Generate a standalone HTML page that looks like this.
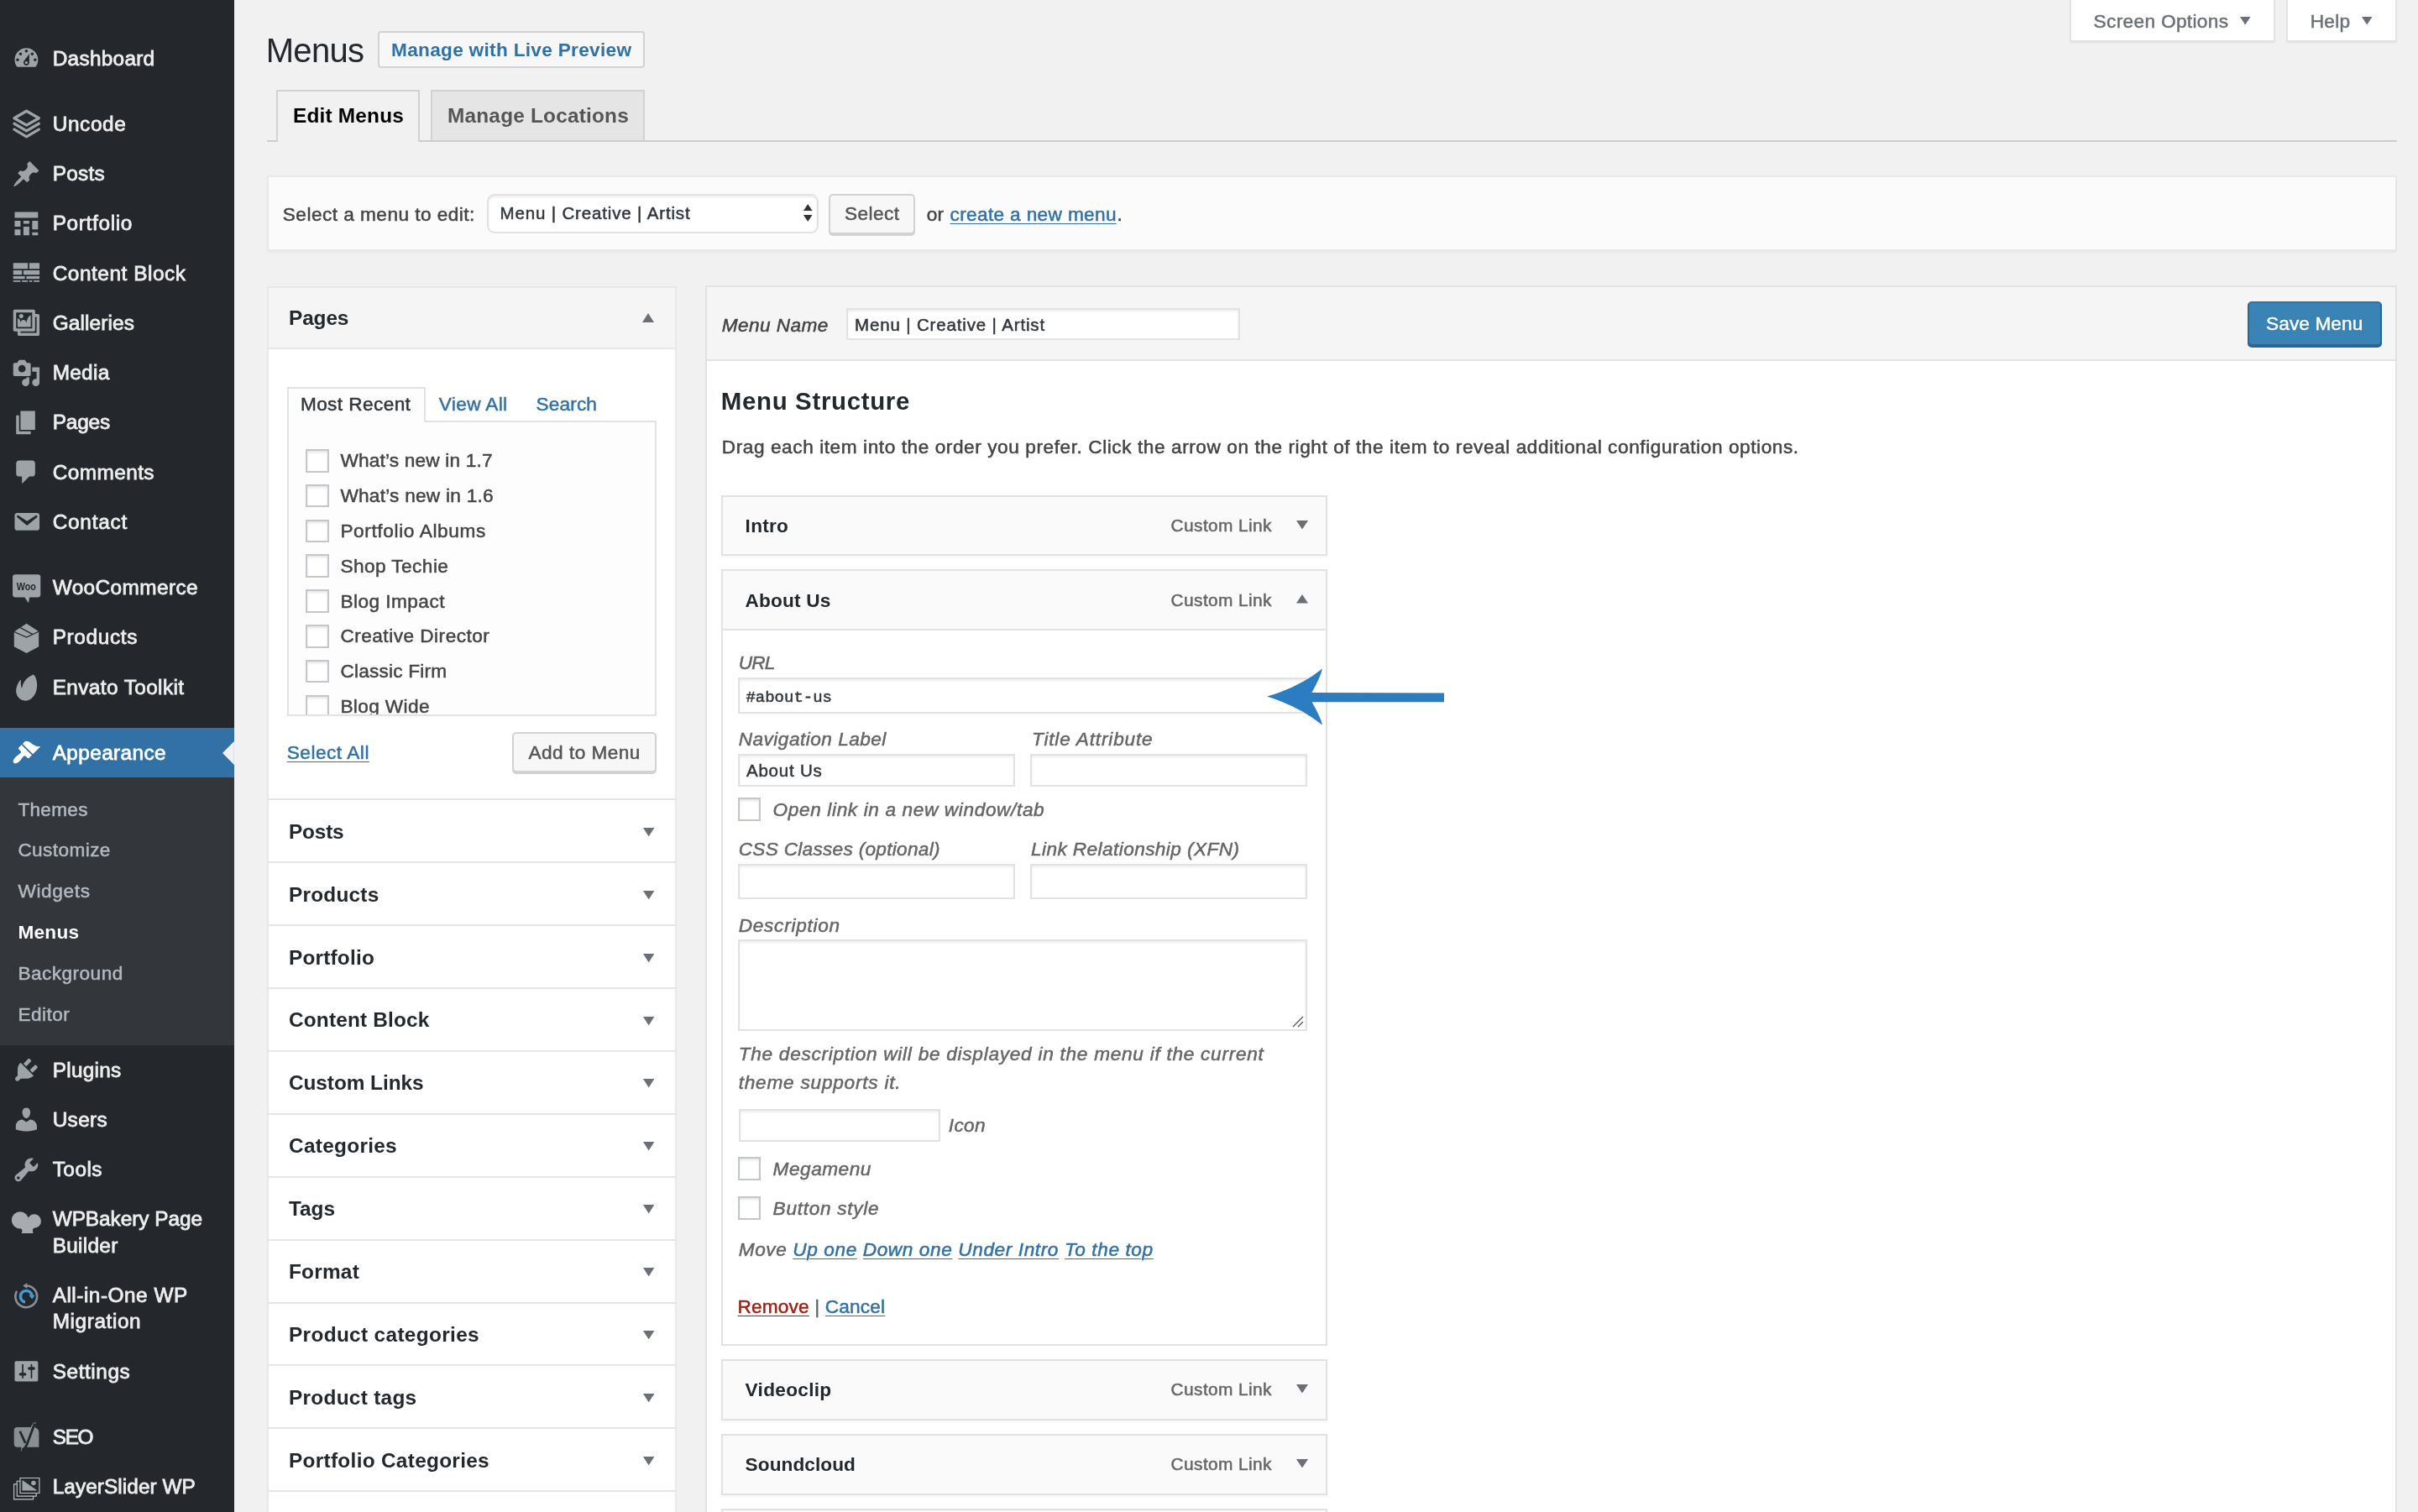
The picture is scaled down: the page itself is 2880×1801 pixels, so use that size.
<!DOCTYPE html>
<html lang="en"><head><meta charset="utf-8"><title>Menus</title><style>
html,body{margin:0;padding:0}
body{width:2880px;height:1801px;overflow:hidden;background:#f1f1f1;position:relative;font-family:"Liberation Sans",sans-serif;color:#444}
.t{position:absolute;white-space:nowrap;line-height:1;margin:0;padding:0;font-weight:normal;display:block;text-decoration:none}
.b{position:absolute;box-sizing:border-box;margin:0;padding:0}
a{color:inherit}
#wpwrap{position:absolute;left:0;top:0;width:2880px;height:1801px;overflow:hidden;will-change:transform}
.u{text-decoration:underline;text-decoration-thickness:1.2px;text-underline-offset:2.5px}
</style></head><body>
<div id="wpwrap">
<div class="b" style="left:0.0px;top:0.0px;width:279.0px;height:1801.0px;background:#24282d;"></div>
<svg class="b" style="overflow:visible;left:13.9px;top:52.1px" width="34.8" height="34.8" viewBox="0 0 20 20" fill="#9ea3a8"><path d="M3.76 16h12.48c1.1-1.37 1.76-3.11 1.76-5 0-4.42-3.58-8-8-8s-8 3.58-8 8c0 1.89.66 3.63 1.76 5zM10 4c.55 0 1 .45 1 1s-.45 1-1 1-1-.45-1-1 .45-1 1-1zM6 6c.55 0 1 .45 1 1s-.45 1-1 1-1-.45-1-1 .45-1 1-1zm8 0c.55 0 1 .45 1 1s-.45 1-1 1-1-.45-1-1 .45-1 1-1zm-5.37 5.55L12 7v6c0 1.1-.9 2-2 2s-2-.9-2-2c0-.57.24-1.08.63-1.45zM4 10c.55 0 1 .45 1 1s-.45 1-1 1-1-.45-1-1 .45-1 1-1zm12 0c.55 0 1 .45 1 1s-.45 1-1 1-1-.45-1-1 .45-1 1-1zm-5 3c0-.55-.45-1-1-1s-1 .45-1 1 .45 1 1 1 1-.45 1-1z"/></svg>
<div class="t" style="left:62.7px;top:57.6px;font-size:24.38px;letter-spacing:0.281px;color:#eee;-webkit-text-stroke:0.5px;-webkit-text-stroke:0.8px;">Dashboard</div>
<svg class="b" style="overflow:visible;left:13.9px;top:130.4px" width="34.8" height="34.8" viewBox="0 0 20 20" fill="#9ea3a8"><g fill="none" stroke="#9ea3a8" stroke-width="1.900" stroke-linejoin="round" stroke-linecap="round"><path d="M10.1 1.300L18.600 6.150 10.1 11 1.700 6.150z"/><path d="M1.700 9.900L10.1 14.850 18.600 9.900"/><path d="M1.700 13.900L10.1 18.900 18.600 13.900"/></g></svg>
<div class="t" style="left:62.7px;top:136.0px;font-size:24.38px;letter-spacing:0.628px;color:#eee;-webkit-text-stroke:0.5px;-webkit-text-stroke:0.8px;">Uncode</div>
<svg class="b" style="overflow:visible;left:13.9px;top:189.6px" width="34.8" height="34.8" viewBox="0 0 20 20" fill="#9ea3a8"><path d="M10.44 3.02l1.82-1.82 6.36 6.35-1.83 1.82c-1.05-.68-2.48-.57-3.41.36l-.75.75c-.92.93-1.04 2.35-.35 3.41l-1.83 1.82-2.41-2.41-2.8 2.79c-.42.42-3.38 2.71-3.8 2.29s1.86-3.39 2.28-3.81l2.79-2.79L4.1 9.36l1.83-1.82c1.05.69 2.48.57 3.4-.36l.75-.75c.93-.92 1.05-2.35.36-3.41z"/></svg>
<div class="t" style="left:62.7px;top:195.2px;font-size:24.38px;letter-spacing:0.266px;color:#eee;-webkit-text-stroke:0.5px;-webkit-text-stroke:0.8px;">Posts</div>
<svg class="b" style="overflow:visible;left:13.9px;top:248.9px" width="34.8" height="34.8" viewBox="0 0 20 20" fill="#9ea3a8"><path d="M2 2h16v4H2V2zm0 6h4v4H2V8zm6 0h4v2H8V8zm6 0h4v6h-4V8zm-6 4h4v6H8v-6zm-6 2h4v4H2v-4zm12 2h4v2h-4v-2z"/></svg>
<div class="t" style="left:62.7px;top:254.4px;font-size:24.38px;letter-spacing:0.651px;color:#eee;-webkit-text-stroke:0.5px;-webkit-text-stroke:0.8px;">Portfolio</div>
<svg class="b" style="overflow:visible;left:13.9px;top:308.1px" width="34.8" height="34.8" viewBox="0 0 20 20" fill="#9ea3a8"><path d="M11 3v4H1V3h10zm8 0v4h-7V3h7zM7 8v3H1V8h6zm12 0v3H8V8h11zM9 12v2H1v-2h8zm10 0v2h-9v-2h9zM6 15v1H1v-1h5zm5 0v1H7v-1h4zm3 0v1h-2v-1h2zm5 0v1h-4v-1h4z"/></svg>
<div class="t" style="left:62.7px;top:313.6px;font-size:24.38px;letter-spacing:0.540px;color:#eee;-webkit-text-stroke:0.5px;-webkit-text-stroke:0.8px;">Content Block</div>
<svg class="b" style="overflow:visible;left:13.9px;top:367.3px" width="34.8" height="34.8" viewBox="0 0 20 20" fill="#9ea3a8"><path d="M16 4h1.96c.57 0 1.04.47 1.04 1.04v12.92c0 .57-.47 1.04-1.04 1.04H5.04C4.47 19 4 18.53 4 17.96V16H2.04C1.47 16 1 15.53 1 14.96V2.04C1 1.47 1.47 1 2.04 1h12.92c.57 0 1.04.47 1.04 1.04V4zM3 14h11V3H3v11zm5-8.5C8 4.67 7.33 4 6.5 4S5 4.67 5 5.5 5.67 7 6.5 7 8 6.33 8 5.5zm2 4.5s1-5 3-5v8H4V7c2 0 2 3 2 3s.33-2 2-2 2 2 2 2zm7 7V6h-1v8.96c0 .57-.47 1.04-1.04 1.04H6v1h11z"/></svg>
<div class="t" style="left:62.7px;top:372.8px;font-size:24.38px;letter-spacing:0.122px;color:#eee;-webkit-text-stroke:0.5px;-webkit-text-stroke:0.8px;">Galleries</div>
<svg class="b" style="overflow:visible;left:13.9px;top:426.5px" width="34.8" height="34.8" viewBox="0 0 20 20" fill="#9ea3a8"><path d="M13 11V4c0-.55-.45-1-1-1h-1.67L9 1H5L3.67 3H2c-.55 0-1 .45-1 1v7c0 .55.45 1 1 1h10c.55 0 1-.45 1-1zM7 4.5c1.38 0 2.5 1.12 2.5 2.5S8.38 9.5 7 9.5 4.5 8.38 4.5 7 5.62 4.5 7 4.5zM14 6h5v10.5c0 1.38-1.12 2.5-2.5 2.5S14 17.88 14 16.5s1.12-2.5 2.5-2.5c.17 0 .34.02.5.05V9h-3V6zm-4 8.05V13h2v3.5c0 1.38-1.12 2.5-2.5 2.5S7 17.88 7 16.5 8.12 14 9.5 14c.17 0 .34.02.5.05z"/></svg>
<div class="t" style="left:62.7px;top:432.0px;font-size:24.38px;letter-spacing:0.280px;color:#eee;-webkit-text-stroke:0.5px;-webkit-text-stroke:0.8px;">Media</div>
<svg class="b" style="overflow:visible;left:13.9px;top:485.7px" width="34.8" height="34.8" viewBox="0 0 20 20" fill="#9ea3a8"><path d="M6 15V2h10v13H6zm-1 1h8v2H3V5h2v11z"/></svg>
<div class="t" style="left:62.7px;top:491.3px;font-size:24.38px;letter-spacing:-0.165px;color:#eee;-webkit-text-stroke:0.5px;-webkit-text-stroke:0.8px;">Pages</div>
<svg class="b" style="overflow:visible;left:13.9px;top:544.9px" width="34.8" height="34.8" viewBox="0 0 20 20" fill="#9ea3a8"><path d="M5 2h9c1.1 0 2 .9 2 2v7c0 1.1-.9 2-2 2h-2l-5 5v-5H5c-1.1 0-2-.9-2-2V4c0-1.1.9-2 2-2z"/></svg>
<div class="t" style="left:62.7px;top:550.5px;font-size:24.38px;letter-spacing:0.429px;color:#eee;-webkit-text-stroke:0.5px;-webkit-text-stroke:0.8px;">Comments</div>
<svg class="b" style="overflow:visible;left:13.9px;top:604.1px" width="34.8" height="34.8" viewBox="0 0 20 20" fill="#9ea3a8"><path d="M3.87 4h13.25C18.37 4 19 4.59 19 5.79v8.42c0 1.19-.63 1.79-1.88 1.79H3.87c-1.25 0-1.88-.6-1.88-1.79V5.79c0-1.2.63-1.79 1.88-1.79zm6.62 8.6l6.74-5.53c.24-.2.43-.66.13-1.07-.29-.41-.82-.42-1.17-.17l-5.7 3.86L4.8 5.83c-.35-.25-.88-.24-1.17.17-.3.41-.11.87.13 1.07z"/></svg>
<div class="t" style="left:62.7px;top:609.7px;font-size:24.38px;letter-spacing:0.754px;color:#eee;-webkit-text-stroke:0.5px;-webkit-text-stroke:0.8px;">Contact</div>
<svg class="b" style="overflow:visible;left:13.9px;top:682.5px" width="34.8" height="34.8" viewBox="0 0 20 20" fill="#9ea3a8"><path d="M2.300.7h15.700c.95 0 1.700.75 1.700 1.700v12.300c0 .95-.75 1.700-1.700 1.700h-5.800l-.7 3.800-2.700-3.800H2.300c-.95 0-1.700-.75-1.700-1.700V2.400c0-.95.75-1.700 1.700-1.700z"/><text x="3.300" y="11.600" font-family="Liberation Sans, sans-serif" font-size="7.800" font-weight="bold" textLength="13.300" lengthAdjust="spacingAndGlyphs" fill="#24282d">Woo</text></svg>
<div class="t" style="left:62.7px;top:688.0px;font-size:24.38px;letter-spacing:0.400px;color:#eee;-webkit-text-stroke:0.5px;-webkit-text-stroke:0.8px;">WooCommerce</div>
<svg class="b" style="overflow:visible;left:13.9px;top:741.7px" width="34.8" height="34.8" viewBox="0 0 20 20" fill="#9ea3a8"><path d="M10.1.5l8.400 5.400v10.300l-8.400 4.500-8.500-4.500V6z"/><path d="M1.600 6l8.500 3.800 8.400-3.900M5.850 3.250l8.450 4.600" fill="none" stroke="#24282d" stroke-width=".7"/></svg>
<div class="t" style="left:62.7px;top:747.3px;font-size:24.38px;letter-spacing:0.636px;color:#eee;-webkit-text-stroke:0.5px;-webkit-text-stroke:0.8px;">Products</div>
<svg class="b" style="overflow:visible;left:13.9px;top:800.9px" width="34.8" height="34.8" viewBox="0 0 20 20" fill="#9ea3a8"><path d="M14.900 1.400C16.500 2.500 18.500 8 16.500 13.500 15 17.500 11.500 19.800 8.500 19.300 5 18.700 2.600 15.500 3 11.800c.2-2.300 1.200-4.600 2.600-6.400.4-.4.800-.2.700.4-.3 2-0 4 .7 5.100C7.200 8 9.500 3.300 14.900 1.400z"/></svg>
<div class="t" style="left:62.7px;top:806.5px;font-size:24.38px;letter-spacing:0.390px;color:#eee;-webkit-text-stroke:0.5px;-webkit-text-stroke:0.8px;">Envato Toolkit</div>
<div class="b" style="left:0.0px;top:867.1px;width:279.0px;height:59.2px;background:#3171a5;"></div>
<svg class="b" style="left:265.1px;top:882.8px" width="13.9" height="27.9"><polygon points="13.9,0 13.9,27.9 0,13.9" fill="#f1f1f1"/></svg>
<svg class="b" style="overflow:visible;left:13.9px;top:879.3px" width="34.8" height="34.8" viewBox="0 0 20 20" fill="#fff"><path d="M14.48 11.06L7.41 3.99l1.5-1.5c.5-.56 2.3-.47 3.51.32 1.21.8 1.43 1.28 2.91 2.1 1.18.64 2.45 1.26 4.45.85zm-.71.71L6.7 4.7 4.93 6.47c-.39.39-.39 1.02 0 1.41l1.06 1.06c.39.39.39 1.03 0 1.42-.6.6-1.43 1.11-2.21 1.69-.35.26-.7.53-1.01.84C1.43 14.23.4 16.08 1.4 17.07c.99 1 2.84-.03 4.18-1.36.31-.31.58-.66.85-1.02.57-.78 1.08-1.61 1.69-2.21.39-.39 1.02-.39 1.41 0l1.06 1.06c.39.39 1.02.39 1.41 0z"/></svg>
<div class="t" style="left:62.7px;top:884.8px;font-size:24.38px;letter-spacing:0.381px;color:#fff;-webkit-text-stroke:0.5px;-webkit-text-stroke:0.8px;">Appearance</div>
<div class="b" style="left:0.0px;top:926.3px;width:279.0px;height:318.7px;background:#33373c;"></div>
<div class="t" style="left:21.4px;top:953.7px;font-size:22.64px;letter-spacing:0.270px;color:#b4b9be;-webkit-text-stroke:0.5px;">Themes</div>
<div class="t" style="left:21.4px;top:1002.4px;font-size:22.64px;letter-spacing:0.395px;color:#b4b9be;-webkit-text-stroke:0.5px;">Customize</div>
<div class="t" style="left:21.4px;top:1051.2px;font-size:22.64px;letter-spacing:0.646px;color:#b4b9be;-webkit-text-stroke:0.5px;">Widgets</div>
<div class="t" style="left:21.4px;top:1099.9px;font-size:22.64px;letter-spacing:0.260px;color:#fff;font-weight:bold;">Menus</div>
<div class="t" style="left:21.4px;top:1148.7px;font-size:22.64px;letter-spacing:0.457px;color:#b4b9be;-webkit-text-stroke:0.5px;">Background</div>
<div class="t" style="left:21.4px;top:1197.5px;font-size:22.64px;letter-spacing:0.460px;color:#b4b9be;-webkit-text-stroke:0.5px;">Editor</div>
<svg class="b" style="overflow:visible;left:13.9px;top:1257.2px" width="34.8" height="34.8" viewBox="0 0 20 20" fill="#9ea3a8"><path d="M13.11 4.36L9.87 7.6 8 5.73l3.24-3.24c.35-.34 1.05-.2 1.56.32.52.51.66 1.21.31 1.55zm-8 1.77l.91-1.12 9.01 9.01-1.19.84c-.71.71-2.63 1.16-3.82 1.16H6.14L4.9 17.26c-.59.59-1.54.59-2.12 0-.59-.58-.59-1.53 0-2.12l1.24-1.24v-3.88c0-1.13.4-3.19 1.09-3.89zm7.26 3.97l3.24-3.24c.34-.35 1.04-.21 1.55.31.52.51.66 1.21.31 1.55l-3.24 3.25z"/></svg>
<div class="t" style="left:62.7px;top:1262.7px;font-size:24.38px;letter-spacing:0.263px;color:#eee;-webkit-text-stroke:0.5px;-webkit-text-stroke:0.8px;">Plugins</div>
<svg class="b" style="overflow:visible;left:13.9px;top:1316.4px" width="34.8" height="34.8" viewBox="0 0 20 20" fill="#9ea3a8"><path d="M10 9.25c-2.27 0-2.73-3.44-2.73-3.44C7 4.02 7.82 2 9.97 2c2.16 0 2.98 2.02 2.71 3.81 0 0-.41 3.44-2.68 3.44zm0 2.57L12.72 10c2.39 0 4.52 2.33 4.52 4.53v2.49s-3.65 1.13-7.24 1.13c-3.65 0-7.24-1.13-7.24-1.13v-2.49c0-2.25 1.94-4.48 4.47-4.48z"/></svg>
<div class="t" style="left:62.7px;top:1322.0px;font-size:24.38px;letter-spacing:0.327px;color:#eee;-webkit-text-stroke:0.5px;-webkit-text-stroke:0.8px;">Users</div>
<svg class="b" style="overflow:visible;left:13.9px;top:1375.6px" width="34.8" height="34.8" viewBox="0 0 20 20" fill="#9ea3a8"><path d="M16.68 9.77c-1.34 1.34-3.3 1.67-4.95.99l-5.41 6.52c-.99.99-2.59.99-3.58 0s-.99-2.59 0-3.57l6.52-5.42c-.68-1.65-.35-3.61.99-4.95 1.28-1.28 3.12-1.62 4.72-1.06l-2.89 2.89 2.82 2.82 2.86-2.87c.53 1.58.18 3.39-1.08 4.65zM3.81 16.21c.4.39 1.04.39 1.43 0 .4-.4.4-1.04 0-1.43-.39-.4-1.03-.4-1.43 0-.39.39-.39 1.03 0 1.43z"/></svg>
<div class="t" style="left:62.7px;top:1381.2px;font-size:24.38px;letter-spacing:0.478px;color:#eee;-webkit-text-stroke:0.5px;-webkit-text-stroke:0.8px;">Tools</div>
<svg class="b" style="overflow:visible;left:13.9px;top:1434.8px" width="34.8" height="34.8" viewBox="0 0 20 20" fill="#9ea3a8"><g fill="#a9abae"><circle cx="5.700" cy="10.600" r="5.800"/><circle cx="15.400" cy="11.200" r="4.700"/><circle cx="10.600" cy="14.400" r="4.700"/><path d="M6.700 19.500L8 15h6l.6 4.500z"/></g></svg>
<div class="t" style="left:62.7px;top:1440.4px;font-size:24.38px;letter-spacing:-0.044px;color:#eee;-webkit-text-stroke:0.5px;-webkit-text-stroke:0.8px;">WPBakery Page</div>
<div class="t" style="left:62.7px;top:1471.7px;font-size:24.38px;letter-spacing:0.287px;color:#eee;-webkit-text-stroke:0.5px;-webkit-text-stroke:0.8px;">Builder</div>
<svg class="b" style="overflow:visible;left:13.9px;top:1525.4px" width="34.8" height="34.8" viewBox="0 0 20 20" fill="#9ea3a8"><path d="M9.900 3.700A7.400 7.400 0 1 1 3.500 7.400" fill="none" stroke="#8c9095" stroke-width="1.500"/><path d="M7.600 3.700l2.900-2v4z" fill="#8c9095"/><path d="M9.200 14.900A3.900 3.900 0 1 1 13.740 10.420" fill="none" stroke="#3f9ad6" stroke-width="2.100"/><path d="M11.700 10.200h4.200l-2 2.800z" fill="#3f9ad6"/></svg>
<div class="t" style="left:62.7px;top:1530.9px;font-size:24.38px;letter-spacing:0.505px;color:#eee;-webkit-text-stroke:0.5px;-webkit-text-stroke:0.8px;">All-in-One WP</div>
<div class="t" style="left:62.7px;top:1562.3px;font-size:24.38px;letter-spacing:0.592px;color:#eee;-webkit-text-stroke:0.5px;-webkit-text-stroke:0.8px;">Migration</div>
<svg class="b" style="overflow:visible;left:13.9px;top:1615.9px" width="34.8" height="34.8" viewBox="0 0 20 20" fill="#9ea3a8"><path d="M18 16V4c0-.55-.45-1-1-1H3c-.55 0-1 .45-1 1v12c0 .55.45 1 1 1h14c.55 0 1-.45 1-1zM8 11h1c.55 0 1 .45 1 1s-.45 1-1 1H8v1.5c0 .28-.22.5-.5.5s-.5-.22-.5-.5V13H6c-.55 0-1-.45-1-1s.45-1 1-1h1V5.500c0-.28.22-.5.5-.5s.5.22.5.5V11zm5-2h-1c-.55 0-1-.45-1-1s.45-1 1-1h1V5.500c0-.28.22-.5.5-.5s.5.22.5.5V7h1c.55 0 1 .45 1 1s-.45 1-1 1h-1v5.500c0 .28-.22.5-.5.5s-.5-.22-.5-.5V9z"/></svg>
<div class="t" style="left:62.7px;top:1621.5px;font-size:24.38px;letter-spacing:0.576px;color:#eee;-webkit-text-stroke:0.5px;-webkit-text-stroke:0.8px;">Settings</div>
<svg class="b" style="overflow:visible;left:13.9px;top:1694.3px" width="34.8" height="34.8" viewBox="0 0 20 20" fill="#9ea3a8"><g fill="#8a8f94"><path d="M3.600 3.400h9.300L14.900.35h1.700l-.9 3.300c1.700.4 2.900 1.500 2.900 3.300v10.150H8.600L6.100 20.200l.5-3.100H3.600c-1.200 0-2.050-.9-2.050-2.100V5.500c0-1.200.85-2.100 2.050-2.100z"/></g><path d="M5.600 6.200l3.700 8.100M15.700.9l-5.100 13.700c-.8 2.200-1.800 3.600-3.600 4.400" stroke="#24282d" stroke-width="1.600" fill="none"/></svg>
<div class="t" style="left:62.7px;top:1699.9px;font-size:24.38px;letter-spacing:-1.295px;color:#eee;-webkit-text-stroke:0.5px;-webkit-text-stroke:0.8px;">SEO</div>
<svg class="b" style="overflow:visible;left:13.9px;top:1753.5px" width="34.8" height="34.8" viewBox="0 0 20 20" fill="#9ea3a8"><g fill="none" stroke="#c3c6c9" stroke-width=".65"><path d="M5.750 3.750h13.150v10.350H5.750z"/><path d="M5.750 5.900H3.600v10.300h13.200v-2.100"/><path d="M3.600 8H1.500v10.300h13.200v-2.100"/></g><path d="M7.200 5.200l10.400 7.200H7.200z"/><circle cx="14.900" cy="7.200" r="1.600"/></svg>
<div class="t" style="left:62.7px;top:1759.1px;font-size:24.38px;letter-spacing:0.066px;color:#eee;-webkit-text-stroke:0.5px;-webkit-text-stroke:0.8px;">LayerSlider WP</div>
<div class="b" style="left:2464.7px;top:-4.0px;width:245.3px;height:53.6px;background:#fff;border:2px solid #e2e2e2;box-shadow:0 2px 2px -1px rgba(0,0,0,.08);"></div>
<div class="t" style="left:2493.6px;top:14.8px;font-size:22.64px;letter-spacing:0.339px;color:#6a7076;-webkit-text-stroke:0.5px;">Screen Options</div>
<svg class="b" style="left:2668.2px;top:19.8px" width="12.5" height="9.5"><polygon points="0,0 12.5,0 6.2,9.5" fill="#6a7076"/></svg>
<div class="b" style="left:2722.7px;top:-4.0px;width:132.3px;height:53.6px;background:#fff;border:2px solid #e2e2e2;box-shadow:0 2px 2px -1px rgba(0,0,0,.08);"></div>
<div class="t" style="left:2751.7px;top:14.8px;font-size:22.64px;letter-spacing:0.259px;color:#6a7076;-webkit-text-stroke:0.5px;">Help</div>
<svg class="b" style="left:2812.8px;top:19.8px" width="12.5" height="9.5"><polygon points="0,0 12.5,0 6.2,9.5" fill="#6a7076"/></svg>
<h1 class="t" style="left:316.7px;top:39.6px;font-size:40.05px;letter-spacing:-0.705px;color:#23282d;-webkit-text-stroke:0.5px;-webkit-text-stroke:0;">Menus</h1>
<div class="b" style="left:450.3px;top:37.0px;width:317.7px;height:44.0px;background:#f7f7f7;border:2px solid #d2d2d2;border-radius:4px;"></div>
<a class="t" style="left:466.0px;top:49.1px;font-size:22.64px;letter-spacing:0.299px;color:#3171a5;font-weight:bold;">Manage with Live Preview</a>
<div class="b" style="left:317.8px;top:166.5px;width:2537.2px;height:2.0px;background:#ccc;"></div>
<div class="b" style="left:329.2px;top:106.5px;width:170.6px;height:62.1px;background:#f1f1f1;border:2px solid #d2d2d2;border-bottom:none;"></div>
<a class="t" style="left:349.0px;top:126.2px;font-size:24.38px;letter-spacing:0.196px;color:#000;font-weight:bold;">Edit Menus</a>
<div class="b" style="left:512.6px;top:106.5px;width:255.4px;height:60.5px;background:#e5e5e5;border:2px solid #d2d2d2;border-bottom:none;"></div>
<a class="t" style="left:533.0px;top:126.2px;font-size:24.38px;letter-spacing:0.206px;color:#555;font-weight:bold;">Manage Locations</a>
<div class="b" style="left:317.8px;top:209.4px;width:2537.2px;height:89.7px;background:#fbfbfb;border:2px solid #e8e8e8;box-shadow:0 2px 2px rgba(0,0,0,.04);"></div>
<div class="t" style="left:336.8px;top:244.7px;font-size:22.64px;letter-spacing:0.465px;color:#444;-webkit-text-stroke:0.5px;">Select a menu to edit:</div>
<div class="b" style="left:580.4px;top:230.9px;width:394.3px;height:47.0px;background:#fff;border:2px solid #e2e2e2;border-radius:9px;box-shadow:inset 0 2px 3px rgba(0,0,0,.07);"></div>
<div class="t" style="left:595.5px;top:243.9px;font-size:20.50px;letter-spacing:0.849px;color:#32373c;-webkit-text-stroke:0.5px;">Menu | Creative | Artist</div>
<svg class="b" style="left:957.2px;top:243.0px" width="10.5" height="8.0"><polygon points="5.2,0 10.5,8.0 0,8.0" fill="#333"/></svg>
<svg class="b" style="left:957.2px;top:255.5px" width="10.5" height="8.0"><polygon points="0,0 10.5,0 5.2,8.0" fill="#333"/></svg>
<div class="b" style="left:987.0px;top:230.6px;width:103.2px;height:48.4px;background:#f7f7f7;border:2px solid #d2d2d2;border-radius:5px;box-shadow:0 2px 0 #d2d2d2;"></div>
<div class="t" style="left:1006.0px;top:244.3px;font-size:22.64px;letter-spacing:0.429px;color:#555;-webkit-text-stroke:0.5px;">Select</div>
<div class="t" style="left:1103.7px;top:244.7px;font-size:22.64px;letter-spacing:0.334px;color:#444;-webkit-text-stroke:0.5px;">or</div>
<div class="t" style="left:1131.5px;top:244.7px;font-size:22.64px;letter-spacing:0.350px;color:#3171a5;-webkit-text-stroke:0.5px;"><span class="u">create a new menu</span></div>
<div class="t" style="left:1330.5px;top:244.7px;font-size:22.64px;letter-spacing:0.498px;color:#444;-webkit-text-stroke:0.5px;">.</div>
<div class="b" style="left:318.0px;top:340.8px;width:488.0px;height:1469.2px;background:#fff;border:2px solid #e8e8e8;"></div>
<div class="b" style="left:318.0px;top:340.8px;width:488.0px;height:75.6px;background:#f5f5f5;border:2px solid #e8e8e8;"></div>
<h3 class="t" style="left:344.0px;top:366.8px;font-size:24.38px;letter-spacing:-0.107px;color:#23282d;font-weight:bold;">Pages</h3>
<svg class="b" style="left:764.7px;top:373.3px" width="14.0" height="11.0"><polygon points="7.0,0 14.0,11.0 0,11.0" fill="#6a7076"/></svg>
<div class="b" style="left:341.7px;top:501.2px;width:440.5px;height:351.9px;background:#fdfdfd;border:2px solid #e2e2e2;"></div>
<div class="b" style="left:341.7px;top:460.5px;width:165.1px;height:42.9px;background:#fdfdfd;border:2px solid #e2e2e2;border-bottom:none;"></div>
<div class="t" style="left:357.9px;top:471.3px;font-size:22.64px;letter-spacing:0.401px;color:#32373c;-webkit-text-stroke:0.5px;">Most Recent</div>
<a class="t" style="left:522.8px;top:471.3px;font-size:22.64px;letter-spacing:0.354px;color:#3171a5;-webkit-text-stroke:0.5px;">View All</a>
<a class="t" style="left:638.6px;top:471.3px;font-size:22.64px;letter-spacing:0.127px;color:#3171a5;-webkit-text-stroke:0.5px;">Search</a>
<div class="b" style="left:343.7px;top:503.2px;width:436.5px;height:347.9px;overflow:hidden">
<div class="b" style="left:20.5px;top:31.9px;width:27.5px;height:27.5px;background:#fff;border:2px solid #c3c7cb;box-shadow:inset 0 2px 3px rgba(0,0,0,.1)"></div>
<div class="t" style="left:61.7px;top:35.2px;font-size:22.64px;letter-spacing:0.195px;color:#444;-webkit-text-stroke:0.5px;">What’s new in 1.7</div>
<div class="b" style="left:20.5px;top:73.7px;width:27.5px;height:27.5px;background:#fff;border:2px solid #c3c7cb;box-shadow:inset 0 2px 3px rgba(0,0,0,.1)"></div>
<div class="t" style="left:61.7px;top:77.0px;font-size:22.64px;letter-spacing:0.254px;color:#444;-webkit-text-stroke:0.5px;">What’s new in 1.6</div>
<div class="b" style="left:20.5px;top:115.5px;width:27.5px;height:27.5px;background:#fff;border:2px solid #c3c7cb;box-shadow:inset 0 2px 3px rgba(0,0,0,.1)"></div>
<div class="t" style="left:61.7px;top:118.8px;font-size:22.64px;letter-spacing:0.626px;color:#444;-webkit-text-stroke:0.5px;">Portfolio Albums</div>
<div class="b" style="left:20.5px;top:157.3px;width:27.5px;height:27.5px;background:#fff;border:2px solid #c3c7cb;box-shadow:inset 0 2px 3px rgba(0,0,0,.1)"></div>
<div class="t" style="left:61.7px;top:160.6px;font-size:22.64px;letter-spacing:0.445px;color:#444;-webkit-text-stroke:0.5px;">Shop Techie</div>
<div class="b" style="left:20.5px;top:199.1px;width:27.5px;height:27.5px;background:#fff;border:2px solid #c3c7cb;box-shadow:inset 0 2px 3px rgba(0,0,0,.1)"></div>
<div class="t" style="left:61.7px;top:202.4px;font-size:22.64px;letter-spacing:0.460px;color:#444;-webkit-text-stroke:0.5px;">Blog Impact</div>
<div class="b" style="left:20.5px;top:240.9px;width:27.5px;height:27.5px;background:#fff;border:2px solid #c3c7cb;box-shadow:inset 0 2px 3px rgba(0,0,0,.1)"></div>
<div class="t" style="left:61.7px;top:244.2px;font-size:22.64px;letter-spacing:0.486px;color:#444;-webkit-text-stroke:0.5px;">Creative Director</div>
<div class="b" style="left:20.5px;top:282.7px;width:27.5px;height:27.5px;background:#fff;border:2px solid #c3c7cb;box-shadow:inset 0 2px 3px rgba(0,0,0,.1)"></div>
<div class="t" style="left:61.7px;top:286.0px;font-size:22.64px;letter-spacing:0.216px;color:#444;-webkit-text-stroke:0.5px;">Classic Firm</div>
<div class="b" style="left:20.5px;top:324.5px;width:27.5px;height:27.5px;background:#fff;border:2px solid #c3c7cb;box-shadow:inset 0 2px 3px rgba(0,0,0,.1)"></div>
<div class="t" style="left:61.7px;top:327.8px;font-size:22.64px;letter-spacing:0.379px;color:#444;-webkit-text-stroke:0.5px;">Blog Wide</div>
</div>
<div class="t" style="left:341.7px;top:885.5px;font-size:22.64px;letter-spacing:0.517px;color:#3171a5;-webkit-text-stroke:0.5px;"><span class="u">Select All</span></div>
<div class="b" style="left:610.2px;top:872.0px;width:171.8px;height:48.0px;background:#f7f7f7;border:2px solid #d2d2d2;border-radius:5px;box-shadow:0 2px 0 #d2d2d2;"></div>
<div class="t" style="left:629.5px;top:886.3px;font-size:22.64px;letter-spacing:0.466px;color:#555;-webkit-text-stroke:0.5px;">Add to Menu</div>
<div class="b" style="left:318.0px;top:951.3px;width:488.0px;height:2.0px;background:#e5e5e5;"></div>
<h3 class="t" style="left:344.0px;top:978.7px;font-size:24.38px;letter-spacing:-0.179px;color:#23282d;font-weight:bold;">Posts</h3>
<svg class="b" style="left:765.5px;top:985.8px" width="13.4" height="10.4"><polygon points="0,0 13.4,0 6.7,10.4" fill="#6a7076"/></svg>
<div class="b" style="left:318.0px;top:1026.2px;width:488.0px;height:2.0px;background:#e5e5e5;"></div>
<h3 class="t" style="left:344.0px;top:1053.6px;font-size:24.38px;letter-spacing:0.229px;color:#23282d;font-weight:bold;">Products</h3>
<svg class="b" style="left:765.5px;top:1060.7px" width="13.4" height="10.4"><polygon points="0,0 13.4,0 6.7,10.4" fill="#6a7076"/></svg>
<div class="b" style="left:318.0px;top:1101.1px;width:488.0px;height:2.0px;background:#e5e5e5;"></div>
<h3 class="t" style="left:344.0px;top:1128.5px;font-size:24.38px;letter-spacing:0.198px;color:#23282d;font-weight:bold;">Portfolio</h3>
<svg class="b" style="left:765.5px;top:1135.6px" width="13.4" height="10.4"><polygon points="0,0 13.4,0 6.7,10.4" fill="#6a7076"/></svg>
<div class="b" style="left:318.0px;top:1176.0px;width:488.0px;height:2.0px;background:#e5e5e5;"></div>
<h3 class="t" style="left:344.0px;top:1203.4px;font-size:24.38px;letter-spacing:0.173px;color:#23282d;font-weight:bold;">Content Block</h3>
<svg class="b" style="left:765.5px;top:1210.5px" width="13.4" height="10.4"><polygon points="0,0 13.4,0 6.7,10.4" fill="#6a7076"/></svg>
<div class="b" style="left:318.0px;top:1250.9px;width:488.0px;height:2.0px;background:#e5e5e5;"></div>
<h3 class="t" style="left:344.0px;top:1278.3px;font-size:24.38px;letter-spacing:-0.059px;color:#23282d;font-weight:bold;">Custom Links</h3>
<svg class="b" style="left:765.5px;top:1285.4px" width="13.4" height="10.4"><polygon points="0,0 13.4,0 6.7,10.4" fill="#6a7076"/></svg>
<div class="b" style="left:318.0px;top:1325.8px;width:488.0px;height:2.0px;background:#e5e5e5;"></div>
<h3 class="t" style="left:344.0px;top:1353.2px;font-size:24.38px;letter-spacing:0.298px;color:#23282d;font-weight:bold;">Categories</h3>
<svg class="b" style="left:765.5px;top:1360.3px" width="13.4" height="10.4"><polygon points="0,0 13.4,0 6.7,10.4" fill="#6a7076"/></svg>
<div class="b" style="left:318.0px;top:1400.7px;width:488.0px;height:2.0px;background:#e5e5e5;"></div>
<h3 class="t" style="left:344.0px;top:1428.1px;font-size:24.38px;letter-spacing:-0.024px;color:#23282d;font-weight:bold;">Tags</h3>
<svg class="b" style="left:765.5px;top:1435.2px" width="13.4" height="10.4"><polygon points="0,0 13.4,0 6.7,10.4" fill="#6a7076"/></svg>
<div class="b" style="left:318.0px;top:1475.6px;width:488.0px;height:2.0px;background:#e5e5e5;"></div>
<h3 class="t" style="left:344.0px;top:1503.0px;font-size:24.38px;letter-spacing:0.228px;color:#23282d;font-weight:bold;">Format</h3>
<svg class="b" style="left:765.5px;top:1510.1px" width="13.4" height="10.4"><polygon points="0,0 13.4,0 6.7,10.4" fill="#6a7076"/></svg>
<div class="b" style="left:318.0px;top:1550.5px;width:488.0px;height:2.0px;background:#e5e5e5;"></div>
<h3 class="t" style="left:344.0px;top:1577.9px;font-size:24.38px;letter-spacing:0.342px;color:#23282d;font-weight:bold;">Product categories</h3>
<svg class="b" style="left:765.5px;top:1585.0px" width="13.4" height="10.4"><polygon points="0,0 13.4,0 6.7,10.4" fill="#6a7076"/></svg>
<div class="b" style="left:318.0px;top:1625.4px;width:488.0px;height:2.0px;background:#e5e5e5;"></div>
<h3 class="t" style="left:344.0px;top:1652.8px;font-size:24.38px;letter-spacing:0.290px;color:#23282d;font-weight:bold;">Product tags</h3>
<svg class="b" style="left:765.5px;top:1659.9px" width="13.4" height="10.4"><polygon points="0,0 13.4,0 6.7,10.4" fill="#6a7076"/></svg>
<div class="b" style="left:318.0px;top:1700.3px;width:488.0px;height:2.0px;background:#e5e5e5;"></div>
<h3 class="t" style="left:344.0px;top:1727.7px;font-size:24.38px;letter-spacing:0.300px;color:#23282d;font-weight:bold;">Portfolio Categories</h3>
<svg class="b" style="left:765.5px;top:1734.8px" width="13.4" height="10.4"><polygon points="0,0 13.4,0 6.7,10.4" fill="#6a7076"/></svg>
<div class="b" style="left:318.0px;top:1775.2px;width:488.0px;height:2.0px;background:#e5e5e5;"></div>
<div class="b" style="left:840.0px;top:339.9px;width:2015.0px;height:1470.1px;background:#fff;border:2px solid #e2e2e2;"></div>
<div class="b" style="left:840.0px;top:339.9px;width:2015.0px;height:90.1px;background:#f5f5f5;border:2px solid #e2e2e2;"></div>
<div class="t" style="left:859.8px;top:377.1px;font-size:22.64px;letter-spacing:0.420px;color:#444;-webkit-text-stroke:0.5px;font-style:italic;">Menu Name</div>
<div class="b" style="left:1007.5px;top:366.7px;width:469.5px;height:38.5px;background:#fff;border:2px solid #e2e2e2;box-shadow:inset 0 2px 3px rgba(0,0,0,.07);"></div>
<div class="t" style="left:1018.0px;top:376.9px;font-size:20.50px;letter-spacing:0.849px;color:#32373c;-webkit-text-stroke:0.5px;">Menu | Creative | Artist</div>
<div class="b" style="left:2677.0px;top:359.3px;width:159.6px;height:52.4px;background:#3a83b5;border:2px solid #2b6595;border-color:#3171a5 #2b6595 #2b6595;border-radius:5px;box-shadow:0 2px 0 #2b6595;"></div>
<div class="t" style="left:2699.0px;top:375.3px;font-size:22.64px;letter-spacing:0.108px;color:#fff;-webkit-text-stroke:0.5px;text-shadow:0 -1px 1px #2b6595;">Save Menu</div>
<h3 class="t" style="left:858.8px;top:463.3px;font-size:29.43px;letter-spacing:0.667px;color:#23282d;font-weight:bold;">Menu Structure</h3>
<div class="t" style="left:859.8px;top:522.0px;font-size:22.64px;letter-spacing:0.570px;color:#444;-webkit-text-stroke:0.5px;">Drag each item into the order you prefer. Click the arrow on the right of the item to reveal additional configuration options.</div>
<div class="b" style="left:859.0px;top:589.8px;width:721.5px;height:72.5px;background:#fafafa;border:2px solid #e2e2e2;box-shadow:0 2px 2px rgba(0,0,0,.04);"></div>
<div class="t" style="left:887.6px;top:616.1px;font-size:22.64px;letter-spacing:0.260px;color:#23282d;font-weight:bold;">Intro</div>
<div class="t" style="left:1394.6px;top:616.1px;font-size:20.90px;letter-spacing:0.378px;color:#666;-webkit-text-stroke:0.5px;">Custom Link</div>
<svg class="b" style="left:1543.6px;top:619.5px" width="14.0" height="10.5"><polygon points="0,0 14.0,0 7.0,10.5" fill="#6a7076"/></svg>
<div class="b" style="left:859.0px;top:678.3px;width:721.5px;height:72.5px;background:#fafafa;border:2px solid #e2e2e2;box-shadow:0 2px 2px rgba(0,0,0,.04);"></div>
<div class="t" style="left:887.6px;top:704.6px;font-size:22.64px;letter-spacing:0.174px;color:#23282d;font-weight:bold;">About Us</div>
<div class="t" style="left:1394.6px;top:704.6px;font-size:20.90px;letter-spacing:0.378px;color:#666;-webkit-text-stroke:0.5px;">Custom Link</div>
<svg class="b" style="left:1543.6px;top:708.0px" width="14.0" height="10.5"><polygon points="7.0,0 14.0,10.5 0,10.5" fill="#6a7076"/></svg>
<div class="b" style="left:859.0px;top:1619.0px;width:721.5px;height:72.5px;background:#fafafa;border:2px solid #e2e2e2;box-shadow:0 2px 2px rgba(0,0,0,.04);"></div>
<div class="t" style="left:887.6px;top:1645.3px;font-size:22.64px;letter-spacing:0.296px;color:#23282d;font-weight:bold;">Videoclip</div>
<div class="t" style="left:1394.6px;top:1645.3px;font-size:20.90px;letter-spacing:0.378px;color:#666;-webkit-text-stroke:0.5px;">Custom Link</div>
<svg class="b" style="left:1543.6px;top:1648.8px" width="14.0" height="10.5"><polygon points="0,0 14.0,0 7.0,10.5" fill="#6a7076"/></svg>
<div class="b" style="left:859.0px;top:1708.0px;width:721.5px;height:72.5px;background:#fafafa;border:2px solid #e2e2e2;box-shadow:0 2px 2px rgba(0,0,0,.04);"></div>
<div class="t" style="left:887.6px;top:1734.3px;font-size:22.64px;letter-spacing:0.061px;color:#23282d;font-weight:bold;">Soundcloud</div>
<div class="t" style="left:1394.6px;top:1734.3px;font-size:20.90px;letter-spacing:0.378px;color:#666;-webkit-text-stroke:0.5px;">Custom Link</div>
<svg class="b" style="left:1543.6px;top:1737.8px" width="14.0" height="10.5"><polygon points="0,0 14.0,0 7.0,10.5" fill="#6a7076"/></svg>
<div class="b" style="left:859.0px;top:1796.5px;width:721.5px;height:72.5px;background:#fafafa;border:2px solid #e2e2e2;box-shadow:0 2px 2px rgba(0,0,0,.04);"></div>
<div class="t" style="left:887.6px;top:1822.8px;font-size:22.64px;letter-spacing:0.136px;color:#23282d;font-weight:bold;"></div>
<div class="t" style="left:1394.6px;top:1822.8px;font-size:20.90px;letter-spacing:0.378px;color:#666;-webkit-text-stroke:0.5px;">Custom Link</div>
<svg class="b" style="left:1543.6px;top:1826.2px" width="14.0" height="10.5"><polygon points="0,0 14.0,0 7.0,10.5" fill="#6a7076"/></svg>
<div class="b" style="left:859.0px;top:748.8px;width:721.5px;height:853.9px;background:#fff;border:2px solid #e2e2e2;"></div>
<div class="t" style="left:879.7px;top:779.2px;font-size:22.64px;letter-spacing:-0.830px;color:#666;-webkit-text-stroke:0.5px;font-style:italic;">URL</div>
<div class="b" style="left:878.5px;top:807.3px;width:678.8px;height:42.9px;background:#fff;border:2px solid #e2e2e2;box-shadow:inset 0 2px 3px rgba(0,0,0,.07);"></div>
<div class="t" style="left:888.4px;top:822.1px;font-size:19.00px;letter-spacing:0.000px;color:#32373c;font-family:'Liberation Mono',monospace;-webkit-text-stroke:0.5px;">#about-us</div>
<div class="t" style="left:879.7px;top:870.3px;font-size:22.64px;letter-spacing:0.477px;color:#666;-webkit-text-stroke:0.5px;font-style:italic;">Navigation Label</div>
<div class="t" style="left:1229.0px;top:870.3px;font-size:22.64px;letter-spacing:0.811px;color:#666;-webkit-text-stroke:0.5px;font-style:italic;">Title Attribute</div>
<div class="b" style="left:878.5px;top:897.6px;width:330.3px;height:39.7px;background:#fff;border:2px solid #e2e2e2;box-shadow:inset 0 2px 3px rgba(0,0,0,.07);"></div>
<div class="b" style="left:1227.0px;top:897.6px;width:330.3px;height:39.7px;background:#fff;border:2px solid #e2e2e2;box-shadow:inset 0 2px 3px rgba(0,0,0,.07);"></div>
<div class="t" style="left:889.0px;top:908.1px;font-size:20.50px;letter-spacing:0.772px;color:#32373c;-webkit-text-stroke:0.5px;">About Us</div>
<div class="b" style="left:878.5px;top:950.0px;width:27.5px;height:27.5px;background:#fff;border:2px solid #c3c7cb;box-shadow:inset 0 2px 3px rgba(0,0,0,.1);"></div>
<div class="t" style="left:920.6px;top:953.7px;font-size:22.64px;letter-spacing:0.624px;color:#666;-webkit-text-stroke:0.5px;font-style:italic;">Open link in a new window/tab</div>
<div class="t" style="left:879.7px;top:1001.3px;font-size:22.64px;letter-spacing:0.284px;color:#666;-webkit-text-stroke:0.5px;font-style:italic;">CSS Classes (optional)</div>
<div class="t" style="left:1228.0px;top:1001.3px;font-size:22.64px;letter-spacing:0.410px;color:#666;-webkit-text-stroke:0.5px;font-style:italic;">Link Relationship (XFN)</div>
<div class="b" style="left:878.5px;top:1028.6px;width:330.3px;height:42.9px;background:#fff;border:2px solid #e2e2e2;box-shadow:inset 0 2px 3px rgba(0,0,0,.07);"></div>
<div class="b" style="left:1227.0px;top:1028.6px;width:330.3px;height:42.9px;background:#fff;border:2px solid #e2e2e2;box-shadow:inset 0 2px 3px rgba(0,0,0,.07);"></div>
<div class="t" style="left:879.7px;top:1091.8px;font-size:22.64px;letter-spacing:0.732px;color:#666;-webkit-text-stroke:0.5px;font-style:italic;">Description</div>
<div class="b" style="left:878.5px;top:1119.2px;width:678.8px;height:109.1px;background:#fff;border:2px solid #e2e2e2;box-shadow:inset 0 2px 3px rgba(0,0,0,.07);"></div>
<svg class="b" style="left:1538px;top:1210px" width="16" height="14"><path d="M2 13L14 1M8 13l6-6" stroke="#555" stroke-width="1.300" fill="none"/></svg>
<div class="t" style="left:879.7px;top:1244.7px;font-size:22.64px;letter-spacing:0.727px;color:#666;-webkit-text-stroke:0.5px;font-style:italic;">The description will be displayed in the menu if the current</div>
<div class="t" style="left:879.7px;top:1279.2px;font-size:22.64px;letter-spacing:0.770px;color:#666;-webkit-text-stroke:0.5px;font-style:italic;">theme supports it.</div>
<div class="b" style="left:879.7px;top:1321.2px;width:240.2px;height:39.3px;background:#fff;border:2px solid #e2e2e2;box-shadow:inset 0 2px 3px rgba(0,0,0,.07);"></div>
<div class="t" style="left:1129.8px;top:1330.0px;font-size:22.64px;letter-spacing:0.352px;color:#666;-webkit-text-stroke:0.5px;font-style:italic;">Icon</div>
<div class="b" style="left:878.5px;top:1378.3px;width:27.5px;height:27.5px;background:#fff;border:2px solid #c3c7cb;box-shadow:inset 0 2px 3px rgba(0,0,0,.1);"></div>
<div class="t" style="left:920.6px;top:1381.6px;font-size:22.64px;letter-spacing:0.516px;color:#666;-webkit-text-stroke:0.5px;font-style:italic;">Megamenu</div>
<div class="b" style="left:878.5px;top:1425.3px;width:27.5px;height:27.5px;background:#fff;border:2px solid #c3c7cb;box-shadow:inset 0 2px 3px rgba(0,0,0,.1);"></div>
<div class="t" style="left:920.6px;top:1429.4px;font-size:22.64px;letter-spacing:0.717px;color:#666;-webkit-text-stroke:0.5px;font-style:italic;">Button style</div>
<div class="t" style="left:879.7px;top:1478.3px;font-size:22.64px;letter-spacing:0.598px;color:#666;-webkit-text-stroke:0.5px;font-style:italic;"><span>Move </span><span class="u" style="color:#3171a5">Up one</span> <span class="u" style="color:#3171a5">Down one</span> <span class="u" style="color:#3171a5">Under Intro</span> <span class="u" style="color:#3171a5">To the top</span></div>
<div class="t" style="left:878.5px;top:1545.8px;font-size:22.64px;letter-spacing:0.177px;color:#666;-webkit-text-stroke:0.5px;"><span class="u" style="color:#9c1f14">Remove</span><span style="color:#666"> | </span><span class="u" style="color:#3171a5">Cancel</span></div>
<svg class="b" style="left:1500px;top:790px" width="230" height="80" viewBox="1500 790 230 80"><path d="M1509 829.6 Q1547.6 818.4 1575 796.4 Q1573.1 805.7 1562.4 825 L1720 825.6 L1720 836.2 L1562.6 836.2 Q1573.1 854.5 1575 863.6 Q1547.6 841.6 1509 829.6 Z" fill="#2b7cc1"/></svg>
</div>
</body></html>
